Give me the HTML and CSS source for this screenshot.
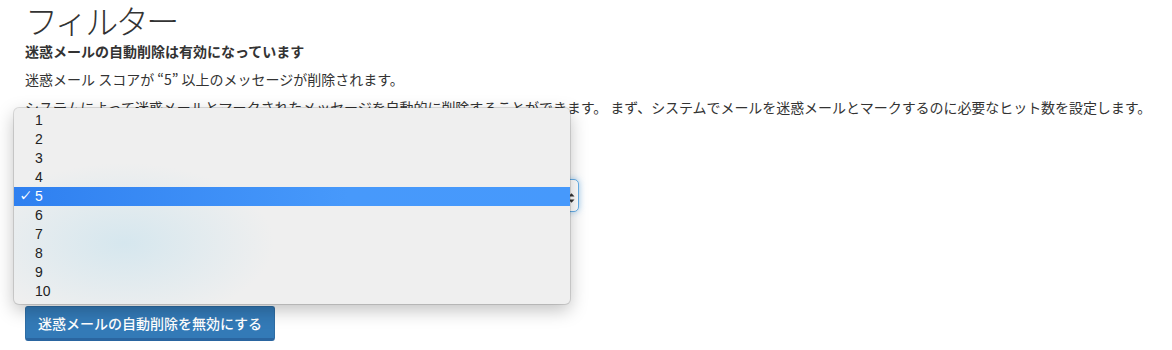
FILE: index.html
```html
<!DOCTYPE html>
<html lang="ja">
<head>
  <meta charset="utf-8">
  <meta name="viewport" content="width=device-width, initial-scale=1">
  <link rel="stylesheet" href="styles.css">
</head>
<body>
  <div class="page">
    <h1 class="title">フィルター</h1>
    <p class="status">迷惑メールの自動削除は有効になっています</p>
    <p class="note">迷惑メール スコアが “5” 以上のメッセージが削除されます。</p>
    <p class="note long">システムによって迷惑メールとマークされたメッセージを自動的に削除することができます。 まず、システムでメールを迷惑メールとマークするのに必要なヒット数を設定します。</p>

    <form class="filter-form">
      <label class="field-label" for="score">ヒット数</label>
      <div class="select-wrap">
        <select id="score" class="score-select">
          <option>1</option><option>2</option><option>3</option><option>4</option>
          <option selected>5</option>
          <option>6</option><option>7</option><option>8</option><option>9</option><option>10</option>
        </select>
        <span class="select-arrows">
          <svg width="7" height="12" viewBox="0 0 7 12"><path d="M0.5 4.5 L3.5 1.2 L6.5 4.5 Z M0.5 7.5 L3.5 10.8 L6.5 7.5 Z" fill="#333"/></svg>
        </span>
      </div>
    </form>

    <button type="button" class="btn-disable">迷惑メールの自動削除を無効にする</button>
  </div>

  <ul class="dropdown-menu">
    <li class="item">1</li>
    <li class="item">2</li>
    <li class="item">3</li>
    <li class="item">4</li>
    <li class="item active"><span class="check">✓</span>5</li>
    <li class="item">6</li>
    <li class="item">7</li>
    <li class="item">8</li>
    <li class="item">9</li>
    <li class="item">10</li>
  </ul>
</body>
</html>
```
FILE: styles.css
```css
html {font-family: "Liberation Sans", "Noto Sans CJK JP", sans-serif; color: #333;}
body {margin: 0; background: #fff; overflow: hidden;}

.page {padding: 0 0 0 25px;}

.title {
  font-family: "Noto Sans CJK JP", sans-serif;
  font-weight: 300;
  font-size: 33px;
  line-height: 40px;
  margin: 0 0 1px 0;
  color: #333;
  letter-spacing: -2.5px;
}
.status {
  font-family: "Noto Sans CJK JP", sans-serif;
  font-weight: bold;
  font-size: 14px;
  line-height: 20px;
  margin: 0 0 8px 0;
}
.note {
  font-family: "Noto Sans CJK JP", sans-serif;
  font-size: 14px;
  line-height: 20px;
  margin: 0 0 8px 0;
}
.note.long {white-space: nowrap; letter-spacing: -0.06px;}

.filter-form {height: 181px; margin: 0;}
.field-label {display: block; font-size: 14px; line-height: 20px; font-weight: bold; margin-bottom: 34px;}
.select-wrap {position: relative; width: 554px;}
.score-select {
  display: block;
  width: 554px;
  height: 33px;
  border: 1px solid #66afe9;
  border-radius: 5px;
  box-shadow: 0 0 6px rgba(102, 175, 233, .6);
  background: #fff;
  -webkit-appearance: none;
  appearance: none;
  font-size: 14px;
  padding: 0 10px;
}
.select-arrows {position: absolute; right: 4px; top: 11px;}

.btn-disable {
  display: block;
  width: 250px;
  height: 35px;
  background: #337ab7;
  border: 1px solid #2e6da4;
  border-bottom: 3px solid #2a65a0;
  border-radius: 3px;
  color: #fff;
  font-family: "Noto Sans CJK JP", sans-serif;
  font-size: 14px;
  font-weight: 500;
  padding: 0 10px;
}

.dropdown-menu {
  position: absolute;
  left: 14px;
  top: 108px;
  width: 556px;
  margin: 0;
  padding: 3px 0;
  list-style: none;
  background:
    radial-gradient(ellipse 150px 80px at 110px 135px, rgba(205, 228, 238, .75), rgba(205, 228, 238, 0)),
    #efefef;
  border-radius: 5px;
  box-shadow: 0 0 0 1px rgba(0, 0, 0, .12), 0 6px 18px rgba(0, 0, 0, .25);
  font-family: "Liberation Sans", sans-serif;
  font-size: 14px;
  color: #222;
}
.item {height: 19px; line-height: 19px; padding-left: 21px; position: relative;}
.item.active {
  background: linear-gradient(90deg, #2f80f0, #4799fb 60%, #4699fc);
  color: #fff;
}
.check {position: absolute; left: 5px; top: 0; font-size: 12px; font-weight: bold;}
```
